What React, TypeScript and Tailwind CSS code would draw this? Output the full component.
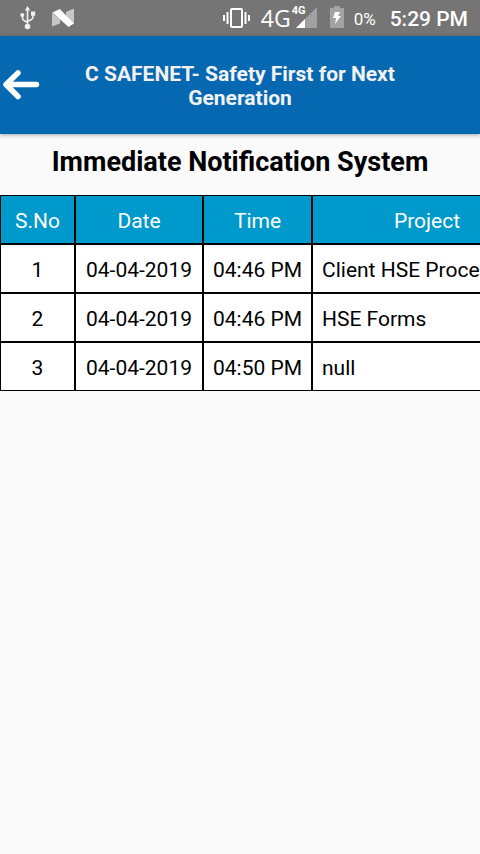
import React from "react";

type Row = { no: number; date: string; time: string; project: string };

const rows: Row[] = [
  { no: 1, date: "04-04-2019", time: "04:46 PM", project: "Client HSE Proce" },
  { no: 2, date: "04-04-2019", time: "04:46 PM", project: "HSE Forms" },
  { no: 3, date: "04-04-2019", time: "04:50 PM", project: "null" },
];

function UsbIcon() {
  return (
    <svg width="18" height="26" viewBox="0 0 18 26" fill="none" stroke="#f1f1f1" strokeWidth="1.6" aria-hidden="true">
      <path d="M8.500 5v17M3.500 10v3c0 1.500 .8 2.300 2 2.800L8.500 17.500M14 9v3c0 1.500-.8 2.300-2 2.800L8.500 16.500" />
      <path d="M8.500 1l2.700 4.500H5.800z" fill="#f1f1f1" stroke="none" />
      <circle cx="8.500" cy="21.500" r="2.800" fill="#f1f1f1" stroke="none" />
      <circle cx="3.300" cy="10" r="2" fill="#f1f1f1" stroke="none" />
      <path d="M12 6.500h4.200v4.200H12z" fill="#f1f1f1" stroke="none" />
    </svg>
  );
}

function NougatIcon() {
  return (
    <svg width="22" height="20" viewBox="0 0 22 20" aria-hidden="true">
      <path d="M0 4.500l8 7v4L0 18.500zM22 .5V15.500l-8-7.500V4z" fill="#c6c6c6" />
      <path d="M.5 4.500L7.800 1 22 15.500 16.500 19z" fill="#fff" />
    </svg>
  );
}

function VibrateIcon() {
  return (
    <svg width="28" height="22" viewBox="0 0 28 22" fill="none" stroke="#fff" strokeWidth="2" aria-hidden="true">
      <rect x="8" y="2" width="11" height="18" rx="1" />
      <path d="M4.500 5v12M1 8v6M22.500 5v12M26 8v6" strokeWidth="2" />
    </svg>
  );
}

function SignalIcon() {
  return (
    <svg width="21" height="21" viewBox="0 0 21 21" aria-hidden="true">
      <path d="M21 0v21H0z" fill="#a1a1a1" />
      <path d="M9 12v9H0z" fill="#fff" />
    </svg>
  );
}

function BatteryIcon() {
  return (
    <svg width="14" height="22" viewBox="0 0 14 22" aria-hidden="true">
      <path d="M4 0h6v2h4v20H0V2h4z" fill="#a3a3a3" />
      <path d="M5 6h5l-2 4h3l-6 8 1-6H3z" fill="#fff" />
    </svg>
  );
}

function StatusBar() {
  return (
    <div className="flex h-9 items-center bg-[#757575] pr-3 pl-[19px] text-white">
      <UsbIcon />
      <div className="ml-[15px]">
        <NougatIcon />
      </div>
      <div className="ml-auto flex items-center">
        <VibrateIcon />
        <span className="ml-2.5 font-['Open_Sans','Noto_Sans',sans-serif] text-[23px] leading-9">4G</span>
        <div className="relative ml-[5px] pb-0.5">
          <SignalIcon />
          <span className="absolute -top-1 -left-1 text-[11px] leading-4 font-bold">4G</span>
        </div>
        <div className="ml-[13px] pb-0.5">
          <BatteryIcon />
        </div>
        <span className="ml-2.5 pt-px text-[17px] leading-9">0%</span>
        <span className="ml-3.5 pt-px text-[21px] leading-9 font-medium">5:29 PM</span>
      </div>
    </div>
  );
}

function AppHeader() {
  return (
    <header className="grid grid-cols-[40px_1fr_40px] items-center bg-[#0668b0] pt-[26px] pb-6 shadow-[0_1px_4px_rgba(0,0,0,0.35)]">
      <button type="button" aria-label="Back" className="pl-[3px]">
        <svg width="37" height="32" viewBox="0 0 37 32" fill="none" stroke="#fff" strokeWidth="5.5" strokeLinecap="round" strokeLinejoin="round" aria-hidden="true">
          <path d="M15 3L3 14.500l12 12M4 14.500h29.500" />
        </svg>
      </button>
      <h1 className="px-8 text-center text-[21px] leading-6 font-bold text-[#f2f2f2]">
        C SAFENET- Safety First for Next Generation
      </h1>
    </header>
  );
}

function NotificationTable() {
  const head = "h-[49px] border border-black bg-[#0099cc] px-[9px] pt-0.5 text-center font-normal text-white";
  const cell = "h-[49px] border border-black bg-white px-[9px] pt-0.5";
  return (
    <div className="overflow-x-auto [scrollbar-width:none]">
      <table className="w-[542px] table-fixed border-separate border-spacing-0 text-[21px] leading-7 whitespace-nowrap text-black">
        <colgroup>
          <col className="w-[75px]" />
          <col className="w-32" />
          <col className="w-[109px]" />
          <col className="w-[230px]" />
        </colgroup>
        <thead>
          <tr>
            <th scope="col" className={head}>S.No</th>
            <th scope="col" className={head}>Date</th>
            <th scope="col" className={head}>Time</th>
            <th scope="col" className={head}>Project</th>
          </tr>
        </thead>
        <tbody>
          {rows.map((row) => (
            <tr key={row.no}>
              <td className={`${cell} text-center`}>{row.no}</td>
              <td className={`${cell} text-center`}>{row.date}</td>
              <td className={`${cell} text-center`}>{row.time}</td>
              <td className={cell}>{row.project}</td>
            </tr>
          ))}
        </tbody>
      </table>
    </div>
  );
}

export default function App() {
  return (
    <div className="min-h-screen bg-[#fafafa] font-[Roboto,sans-serif]">
      <StatusBar />
      <AppHeader />
      <main>
        <h2 className="pt-2.5 pb-[15px] text-center text-[27px] leading-9 font-bold text-black">
          Immediate Notification System
        </h2>
        <NotificationTable />
      </main>
    </div>
  );
}
